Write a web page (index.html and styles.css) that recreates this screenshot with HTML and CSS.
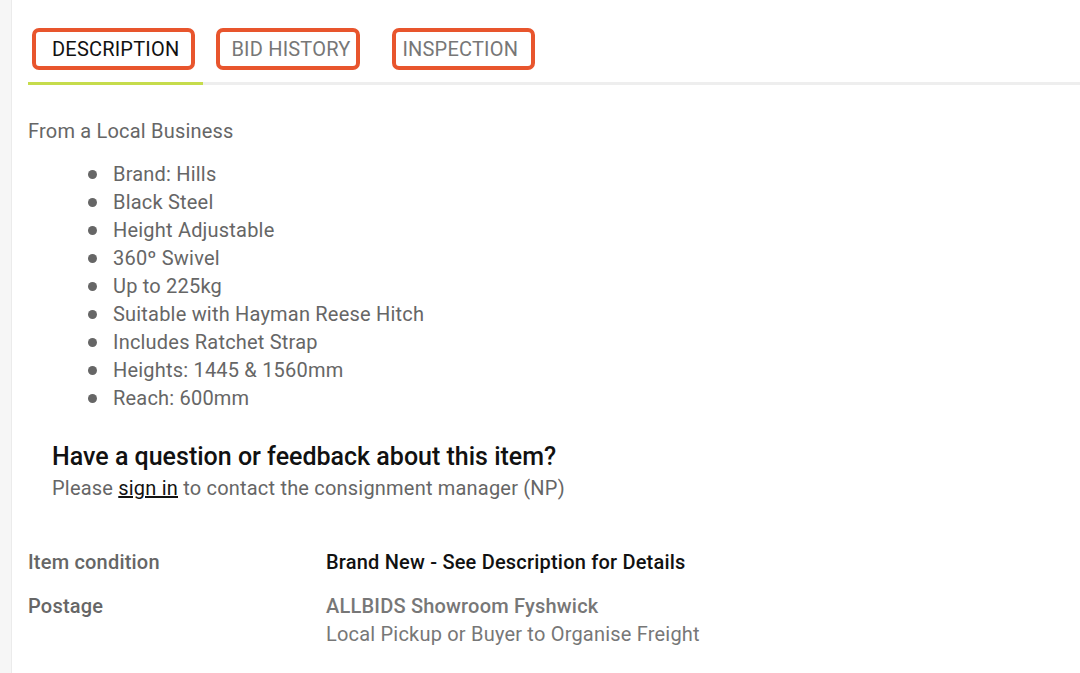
FILE: index.html
```html
<!DOCTYPE html>
<html lang="en">
<head>
  <meta charset="UTF-8">
  <title>Item Description</title>
  <link rel="stylesheet" href="styles.css">
</head>
<body>

  <div class="page">
    <aside class="side"></aside>

    <main class="content">
      <ul class="tabs">
        <li class="tab tab-desc active"><span class="tab-box">DESCRIPTION</span></li>
        <li class="tab tab-bids"><span class="tab-box">BID HISTORY</span></li>
        <li class="tab tab-insp"><span class="tab-box">INSPECTION</span></li>
      </ul>

      <p class="intro">From a Local Business</p>

      <ul class="features">
        <li>Brand: Hills</li>
        <li>Black Steel</li>
        <li>Height Adjustable</li>
        <li>360º Swivel</li>
        <li>Up to 225kg</li>
        <li>Suitable with Hayman Reese Hitch</li>
        <li>Includes Ratchet Strap</li>
        <li>Heights: 1445 &amp; 1560mm</li>
        <li>Reach: 600mm</li>
      </ul>

      <div class="question">
        <h2>Have a question or feedback about this item?</h2>
        <p>Please <a href="#">sign in</a> to contact the consignment manager (NP)</p>
      </div>

      <div class="details">
        <div class="row">
          <div class="label">Item condition</div>
          <div class="value strong">Brand New - See Description for Details</div>
        </div>
        <div class="row">
          <div class="label">Postage</div>
          <div class="value">
            <div class="muted-strong">ALLBIDS Showroom Fyshwick</div>
            <div>Local Pickup or Buyer to Organise Freight</div>
          </div>
        </div>
      </div>
    </main>
  </div>

</body>
</html>
```

FILE: styles.css
```css
body {
  margin: 0;
  padding: 0;
  font-family: Roboto, 'Noto Sans', sans-serif;
  background: #ffffff;
  color: #666666;
  letter-spacing: 0.2px;
}

.page {
  display: flex;
  min-height: 673px;
}

.side {
  width: 11px;
  background: #f6f6f6;
  border-right: 1px solid #ebebeb;
  flex-shrink: 0;
}

.content {
  flex: 1;
  padding-left: 16px;
}

/* tabs */
.tabs {
  list-style: none;
  display: flex;
  margin: 0;
  padding: 0;
  border-bottom: 3px solid #eeeeee;
}

.tab {
  padding: 28px 8px 12px 4px;
  border-bottom: 3px solid transparent;
  margin-bottom: -3px;
  font-size: 20px;
  color: #777777;
}

.tab.active {
  border-bottom-color: #c6dc4c;
  color: #111111;
}

.tab-box {
  display: block;
  height: 34px;
  line-height: 34px;
  border: 4px solid #e8552d;
  border-radius: 7px;
  padding: 0 12px 0 16px;
}

.tab-bids {
  padding-left: 13px;
}

.tab-bids .tab-box {
  padding: 0 6px 0 11px;
}

.tab-insp {
  padding-left: 24px;
}

.tab-insp .tab-box {
  padding: 0 13px 0 6px;
}

/* description */
.intro {
  margin: 32px 0 0;
  font-size: 20px;
  line-height: 28px;
}

.features {
  list-style: none;
  margin: 15px 0 0;
  padding-left: 60px;
  font-size: 20px;
  line-height: 28px;
}

.features li {
  display: flex;
  align-items: center;
  gap: 16px;
}

.features li::before {
  content: "";
  width: 9px;
  height: 9px;
  border-radius: 50%;
  background: #666666;
  flex-shrink: 0;
}

.question {
  margin-top: 31px;
  padding-left: 24px;
}

.question h2 {
  margin: 0;
  font-size: 25px;
  font-weight: 500;
  line-height: 28px;
  letter-spacing: 0;
  color: #111111;
}

.question p {
  margin: 3px 0 0;
  font-size: 20px;
  line-height: 28px;
}

.question a {
  color: #111111;
  text-decoration: underline;
}

/* details */
.details {
  margin-top: 46px;
  display: flex;
  flex-direction: column;
  gap: 16px;
}

.row {
  display: flex;
  font-size: 20px;
  line-height: 28px;
}

.label {
  width: 298px;
  font-weight: 500;
  color: #666666;
}

.value {
  color: #777777;
}

.value.strong {
  font-weight: 500;
  color: #111111;
}

.muted-strong {
  font-weight: 500;
}
```
